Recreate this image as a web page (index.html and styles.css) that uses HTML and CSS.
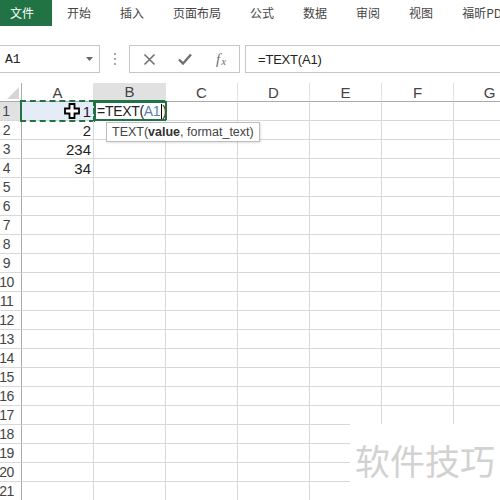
FILE: index.html
```html
<!DOCTYPE html>
<html lang="zh">
<head>
<meta charset="utf-8">
<title>Excel TEXT</title>
<link rel="stylesheet" href="styles.css">
</head>
<body>
<div class="tabs">
  <div class="tab file">文件</div>
  <div class="tab">开始</div>
  <div class="tab">插入</div>
  <div class="tab">页面布局</div>
  <div class="tab">公式</div>
  <div class="tab">数据</div>
  <div class="tab">审阅</div>
  <div class="tab">视图</div>
  <div class="tab">福昕PDF</div>
</div>

<div class="fbar">
  <div class="namebox">
    <span class="nm">A1</span>
    <svg class="dd" width="7" height="4" viewBox="0 0 7 4"><path d="M0 0H7L3.5 4Z" fill="#666"/></svg>
  </div>
  <div class="dots"><i></i><i></i><i></i></div>
  <div class="btns">
    <span class="btn"><svg width="13" height="13" viewBox="0 0 13 13"><path d="M1.5 1.5L11.5 11.5M11.5 1.5L1.5 11.5" stroke="#707070" stroke-width="1.6" fill="none"/></svg></span>
    <span class="btn"><svg width="14" height="12" viewBox="0 0 14 12"><path d="M1 6.5L5 10.5L13 1.5" stroke="#707070" stroke-width="2.4" fill="none"/></svg></span>
    <span class="btn fx"><i>f</i><i class="x">x</i></span>
  </div>
  <div class="finput">=TEXT(A1)</div>
</div>

<div class="sheet">
  <div class="row hdr">
    <div class="rh corner"><svg width="12" height="12" viewBox="0 0 12 12"><path d="M12 0V12H0Z" fill="#d6d6d6"/></svg></div>
    <div class="c ch">A</div><div class="c ch on">B</div><div class="c ch">C</div><div class="c ch">D</div><div class="c ch">E</div><div class="c ch">F</div><div class="c ch">G</div>
  </div>
  <div class="row">
    <div class="rh on">1</div>
    <div class="c a1"><span class="num">1</span></div>
    <div class="c b1"><span class="ftext">=TEXT(<span class="ref">A1</span><i class="caret"></i>)</span></div>
    <div class="c"></div><div class="c"></div><div class="c"></div><div class="c"></div><div class="c"></div>
  </div>
  <div class="row"><div class="rh">2</div><div class="c"><span class="num">2</span></div><div class="c"></div><div class="c"></div><div class="c"></div><div class="c"></div><div class="c"></div><div class="c"></div></div>
  <div class="row"><div class="rh">3</div><div class="c"><span class="num">234</span></div><div class="c"></div><div class="c"></div><div class="c"></div><div class="c"></div><div class="c"></div><div class="c"></div></div>
  <div class="row"><div class="rh">4</div><div class="c"><span class="num">34</span></div><div class="c"></div><div class="c"></div><div class="c"></div><div class="c"></div><div class="c"></div><div class="c"></div></div>
  <div class="row"><div class="rh">5</div><div class="c"></div><div class="c"></div><div class="c"></div><div class="c"></div><div class="c"></div><div class="c"></div><div class="c"></div></div>
  <div class="row"><div class="rh">6</div><div class="c"></div><div class="c"></div><div class="c"></div><div class="c"></div><div class="c"></div><div class="c"></div><div class="c"></div></div>
  <div class="row"><div class="rh">7</div><div class="c"></div><div class="c"></div><div class="c"></div><div class="c"></div><div class="c"></div><div class="c"></div><div class="c"></div></div>
  <div class="row"><div class="rh">8</div><div class="c"></div><div class="c"></div><div class="c"></div><div class="c"></div><div class="c"></div><div class="c"></div><div class="c"></div></div>
  <div class="row"><div class="rh">9</div><div class="c"></div><div class="c"></div><div class="c"></div><div class="c"></div><div class="c"></div><div class="c"></div><div class="c"></div></div>
  <div class="row"><div class="rh">10</div><div class="c"></div><div class="c"></div><div class="c"></div><div class="c"></div><div class="c"></div><div class="c"></div><div class="c"></div></div>
  <div class="row"><div class="rh">11</div><div class="c"></div><div class="c"></div><div class="c"></div><div class="c"></div><div class="c"></div><div class="c"></div><div class="c"></div></div>
  <div class="row"><div class="rh">12</div><div class="c"></div><div class="c"></div><div class="c"></div><div class="c"></div><div class="c"></div><div class="c"></div><div class="c"></div></div>
  <div class="row"><div class="rh">13</div><div class="c"></div><div class="c"></div><div class="c"></div><div class="c"></div><div class="c"></div><div class="c"></div><div class="c"></div></div>
  <div class="row"><div class="rh">14</div><div class="c"></div><div class="c"></div><div class="c"></div><div class="c"></div><div class="c"></div><div class="c"></div><div class="c"></div></div>
  <div class="row"><div class="rh">15</div><div class="c"></div><div class="c"></div><div class="c"></div><div class="c"></div><div class="c"></div><div class="c"></div><div class="c"></div></div>
  <div class="row"><div class="rh">16</div><div class="c"></div><div class="c"></div><div class="c"></div><div class="c"></div><div class="c"></div><div class="c"></div><div class="c"></div></div>
  <div class="row"><div class="rh">17</div><div class="c"></div><div class="c"></div><div class="c"></div><div class="c"></div><div class="c"></div><div class="c"></div><div class="c"></div></div>
  <div class="row"><div class="rh">18</div><div class="c"></div><div class="c"></div><div class="c"></div><div class="c"></div><div class="c"></div><div class="c"></div><div class="c"></div></div>
  <div class="row"><div class="rh">19</div><div class="c"></div><div class="c"></div><div class="c"></div><div class="c"></div><div class="c"></div><div class="c"></div><div class="c"></div></div>
  <div class="row"><div class="rh">20</div><div class="c"></div><div class="c"></div><div class="c"></div><div class="c"></div><div class="c"></div><div class="c"></div><div class="c"></div></div>
  <div class="row"><div class="rh">21</div><div class="c"></div><div class="c"></div><div class="c"></div><div class="c"></div><div class="c"></div><div class="c"></div><div class="c"></div></div>
</div>

<svg class="cursor" width="16" height="16" viewBox="0 0 16 16"><path d="M5.5 1H10.5V5.5H15V10.5H10.5V15H5.5V10.5H1V5.5H5.5Z" fill="#fff" stroke="#000" stroke-width="1.8" stroke-linejoin="miter"/></svg>

<div class="tip">TEXT(<b>value</b>, format_text)</div>

<div class="mark">软件技巧</div>
</body>
</html>
```

FILE: styles.css
```css
html, body {
  margin: 0;
  padding: 0;
}
body {
  width: 500px;
  height: 500px;
  overflow: hidden;
  position: relative;
  background: #fff;
  font-family: "Liberation Sans", "Noto Sans CJK SC", sans-serif;
  color: #222;
}

/* ribbon tabs */
.tabs {
  display: flex;
  height: 26px;
  font-family: "Noto Sans CJK SC", sans-serif;
  font-size: 12px;
  color: #444;
}
.tab {
  display: flex;
  align-items: center;
  padding-bottom: 2px;
  margin-left: 29px;
  white-space: nowrap;
}
.tab.file {
  margin-left: 0;
  margin-right: -14px;
  padding: 0 18px 2px 10px;
  background: #217346;
  color: #fff;
}

/* formula bar */
.fbar {
  display: flex;
  height: 28px;
  margin-top: 19px;
}
.namebox {
  width: 100px;
  box-sizing: border-box;
  border: 1px solid #c6c6c6;
  border-left: none;
  display: flex;
  align-items: center;
  justify-content: space-between;
  padding: 0 6px 0 5px;
}
.nm {
  font-family: "Liberation Mono", monospace;
  font-size: 13px;
  color: #222;
}
.dots {
  width: 29px;
  display: flex;
  flex-direction: column;
  align-items: center;
  justify-content: center;
  gap: 3px;
}
.dots i {
  width: 2px;
  height: 2px;
  background: #a8a8a8;
}
.btns {
  width: 111px;
  box-sizing: border-box;
  border: 1px solid #c6c6c6;
  display: flex;
  align-items: center;
  padding-left: 1px;
}
.btn {
  width: 36px;
  display: flex;
  align-items: center;
  justify-content: center;
}
.fx {
  font-family: "Liberation Serif", serif;
  font-style: italic;
  color: #707070;
  font-size: 15px;
}
.fx i { font-style: italic; }
.fx .x { font-size: 11px; margin-left: 1px; margin-top: 4px; }
.finput {
  flex: 1;
  margin-left: 5px;
  box-sizing: border-box;
  border: 1px solid #c6c6c6;
  border-right: none;
  padding-left: 12px;
  display: flex;
  align-items: center;
  font-size: 13px;
  letter-spacing: -0.2px;
  color: #222;
}

/* sheet */
.sheet {
  margin-top: 10px;
}
.row {
  display: flex;
  height: 19px;
}
.rh {
  width: 22px;
  flex: none;
  box-sizing: border-box;
  border-right: 1px solid #ababab;
  border-bottom: 1px solid #d8d8d8;
  display: flex;
  justify-content: center;
  align-items: center;
  padding-right: 8px;
  font-size: 14px;
  color: #444;
  letter-spacing: -0.5px;
}
.rh.on {
  background: #e1e1e1;
  border-right: 2px solid #217346;
}
.rh.corner {
  padding: 0 2px 2px 0;
  justify-content: flex-end;
  align-items: flex-end;
  border-bottom: 1px solid #ababab;
}
.c {
  width: 72px;
  flex: none;
  box-sizing: border-box;
  border-right: 1px solid #d8d8d8;
  border-bottom: 1px solid #d8d8d8;
  position: relative;
  display: flex;
  align-items: center;
}
.ch {
  justify-content: center;
  font-size: 15px;
  color: #444;
  border-bottom: 1px solid #ababab;
  border-right-color: #e2e2e2;
}
.ch.on {
  background: #e1e1e1;
  border-bottom: 2px solid #217346;
}
.num {
  flex: 1;
  text-align: right;
  padding-right: 2px;
  font-size: 15px;
  color: #222;
}
.a1 {
  background: #e4ecf7;
}
.a1::after {
  content: "";
  position: absolute;
  top: -2px;
  left: -2px;
  right: -2px;
  bottom: -2px;
  border: 2px dashed #217346;
}
.b1::after {
  content: "";
  position: absolute;
  top: -1px;
  left: 0;
  right: -2px;
  bottom: -1px;
  border: 2px solid #217346;
}
.ftext {
  padding-left: 3px;
  font-size: 14px;
  letter-spacing: -0.3px;
  white-space: nowrap;
  color: #222;
  display: flex;
  align-items: center;
}
.ref {
  color: #5a7fb5;
}
.caret {
  display: inline-block;
  width: 1px;
  height: 15px;
  background: #000;
  margin: 0 0 0 1px;
}

/* overlays */
.cursor {
  position: absolute;
  left: 64px;
  top: 103px;
}
.tip {
  position: absolute;
  left: 106px;
  top: 122px;
  width: 154px;
  height: 20px;
  box-sizing: border-box;
  border: 1px solid #bdbdbd;
  background: #fff;
  box-shadow: 1px 1px 2px rgba(0,0,0,0.12);
  font-size: 12.5px;
  color: #444;
  padding-left: 5px;
  line-height: 18px;
  white-space: nowrap;
}
.tip b {
  color: #333;
}
.mark {
  position: absolute;
  left: 350px;
  top: 424px;
  width: 150px;
  height: 76px;
  background: #fff;
  box-sizing: border-box;
  padding: 14px 0 0 5px;
  font-family: "Noto Sans CJK SC", sans-serif;
  font-size: 35px;
  line-height: 44px;
  color: #d2d2d2;
  white-space: nowrap;
}
```
